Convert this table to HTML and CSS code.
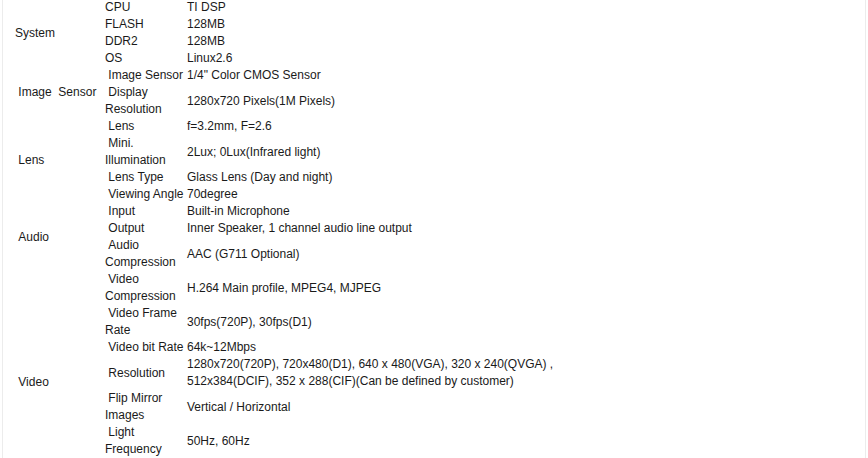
FILE: index.html
```html
<!DOCTYPE html>
<html>
<head>
<meta charset="utf-8">
<link rel="stylesheet" href="styles.css">
</head>
<body>
<div class="frame">
<table class="spec">
<colgroup><col class="c1"><col class="c2"><col class="c3"></colgroup>
<tbody>
<tr><td class="cat" rowspan="4">System</td><td>CPU</td><td>TI DSP</td></tr>
<tr><td>FLASH</td><td>128MB</td></tr>
<tr><td>DDR2</td><td>128MB</td></tr>
<tr><td>OS</td><td>Linux2.6</td></tr>
<tr><td class="cat" rowspan="2">&nbsp;Image&nbsp; Sensor</td><td>&nbsp;Image Sensor</td><td>1/4" Color CMOS Sensor</td></tr>
<tr><td>&nbsp;Display Resolution</td><td>1280x720 Pixels(1M Pixels)</td></tr>
<tr><td class="cat" rowspan="4">&nbsp;Lens</td><td>&nbsp;Lens</td><td>f=3.2mm, F=2.6</td></tr>
<tr><td>&nbsp;Mini. Illumination</td><td>2Lux; 0Lux(Infrared light)</td></tr>
<tr><td>&nbsp;Lens Type</td><td>Glass Lens (Day and night)</td></tr>
<tr><td>&nbsp;Viewing Angle</td><td>70degree</td></tr>
<tr><td class="cat" rowspan="3">&nbsp;Audio</td><td>&nbsp;Input</td><td>Built-in Microphone</td></tr>
<tr><td>&nbsp;Output</td><td>Inner Speaker, 1 channel audio line output</td></tr>
<tr><td>&nbsp;Audio Compression</td><td>AAC (G711 Optional)</td></tr>
<tr><td class="cat" rowspan="7">&nbsp;Video</td><td>&nbsp;Video Compression</td><td>H.264 Main profile, MPEG4, MJPEG</td></tr>
<tr><td>&nbsp;Video Frame Rate</td><td>30fps(720P), 30fps(D1)</td></tr>
<tr><td>&nbsp;Video bit Rate</td><td>64k~12Mbps</td></tr>
<tr><td>&nbsp;Resolution</td><td>1280x720(720P), 720x480(D1), 640 x 480(VGA), 320 x 240(QVGA) , 512x384(DCIF), 352 x 288(CIF)(Can be defined by customer)</td></tr>
<tr><td>&nbsp;Flip Mirror Images</td><td>Vertical / Horizontal</td></tr>
<tr><td>&nbsp;Light Frequency</td><td>50Hz, 60Hz</td></tr>
<tr class="spacer"><td></td><td></td></tr>
</tbody>
</table>
</div>
</body>
</html>
```
FILE: styles.css
```css
html, body {
  margin: 0;
  padding: 0;
  background: #ffffff;
  overflow: hidden;
}
.frame {
  margin-left: 2px;
  width: 862px;
  height: 600px;
  border-left: 1px solid #ececec;
  border-right: 1px solid #ececec;
}
.spec {
  margin-top: -1px;
  border-collapse: collapse;
  table-layout: fixed;
  width: 557px;
  font-family: "Liberation Sans", Arial, sans-serif;
  font-size: 12px;
  line-height: 17px;
  color: #1a1a1a;
}
.c1 { width: 102px; }
.c2 { width: 82px; }
.c3 { width: 373px; }
.spec td {
  padding: 0;
  vertical-align: middle;
  text-align: left;
}
.spec td.cat {
  padding-left: 12px;
}
.spacer td {
  height: 35px;
}
```
